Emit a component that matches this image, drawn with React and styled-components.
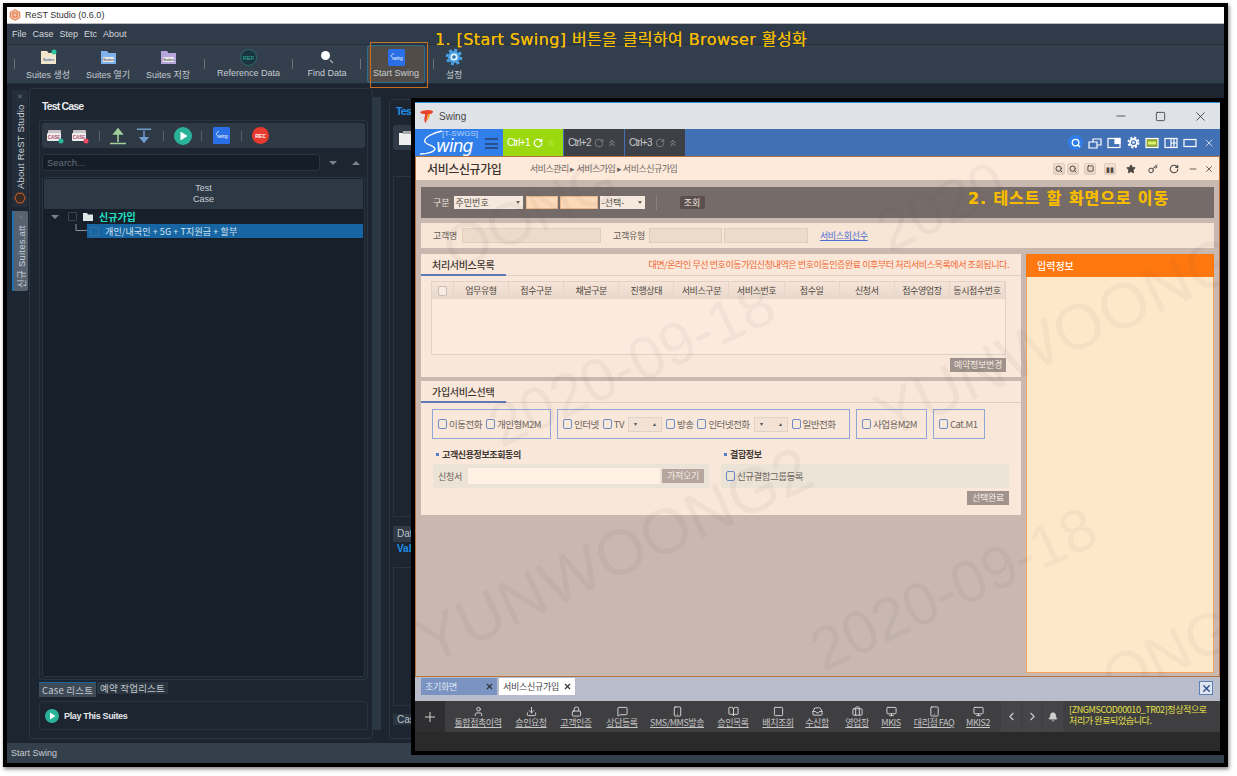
import React from "react";
import styled, { createGlobalStyle } from "styled-components";
import {
  User, Download, Lock, MessageSquare, Smartphone, BookOpen, Square, Inbox, Briefcase,
  Monitor, Tablet, ChevronLeft, ChevronRight, ChevronsUp, Bell, RotateCw, X, Minus, Search, Star, Key, Plus,
} from "lucide-react";

const KR = `"Noto Sans CJK KR", "Liberation Sans", sans-serif`;

const Global = createGlobalStyle`
  html, body { margin: 0; padding: 0; background: #fff; }
  * { box-sizing: border-box; }
  body { font-family: "Liberation Sans", "Noto Sans CJK KR", sans-serif; }
`;

const Page = styled.div`
  width: 1237px;
  height: 776px;
  padding: 3px 9px 9px 3px;
  overflow: hidden;
`;
const Frame = styled.div`
  position: relative;
  width: 1225px;
  height: 764px;
  border: 4px solid #000;
  box-shadow: 1px 2px 4px rgba(0, 0, 0, 0.5);
  display: flex;
  flex-direction: column;
  background: #1c2530;
  overflow: hidden;
`;
const TitleBar = styled.div`
  height: 17px;
  background: #fff;
  display: flex;
  align-items: center;
  gap: 4px;
  padding-left: 2px;
  font-size: 9px;
  color: #333;
  border-bottom: 1px solid #bbb;
`;
const MenuBar = styled.div`
  height: 21px;
  background: #2f3b48;
  display: flex;
  align-items: center;
  gap: 6px;
  padding-left: 5px;
  font-size: 9px;
  color: #d4d8dc;
  border-bottom: 1px solid #25303b;
`;
const ToolBar = styled.div`
  height: 39px;
  background: #333f4c;
  display: flex;
  align-items: stretch;
  padding-left: 7px;
  border-bottom: 1px solid #222c37;
`;
const ToolSep = styled.span`
  width: 1px;
  height: 10px;
  margin: 14px ${(p) => p.$r ?? 6}px 0 ${(p) => p.$l ?? 6}px;
  background: #6a747e;
`;
const ToolItem = styled.div`
  width: ${(p) => p.$w}px;
  display: flex;
  flex-direction: column;
  align-items: center;
  justify-content: flex-start;
  padding-top: 3px;
  gap: 2px;
  font-size: 9px;
  color: #c6ccd2;
  white-space: nowrap;
  border-radius: 3px;
  ${(p) => p.$active && `background: #514c48; border: 1px solid #2c6f92; padding-top: 2px;`}
`;
const ToolGlyph = styled.div`
  width: 18px;
  height: 18px;
  display: flex;
  align-items: center;
  justify-content: center;
`;
const Work = styled.div`
  flex: 1;
  display: flex;
  align-items: stretch;
  padding: 4px 0 4px 5px;
  background: #1c2530;
  min-height: 0;
`;
const Rail = styled.div`
  width: 17px;
  display: flex;
  flex-direction: column;
  gap: 4px;
  padding-top: 2px;
`;
const RailTab = styled.div`
  height: ${(p) => p.$h}px;
  width: 16px;
  background: ${(p) => (p.$on ? "#566270" : "#232e3a")};
  border-right: ${(p) => (p.$on ? "2px solid #1d6fb0" : "0")};
  border-radius: 2px 0 0 2px;
  display: flex;
  align-items: center;
  justify-content: flex-start;
  writing-mode: vertical-rl;
  text-orientation: sideways;
  transform: rotate(180deg);
  gap: 3px;
  padding-top: 3px;
  font-size: 9.5px;
  letter-spacing: 0.2px;
  color: #c8ced4;
  white-space: nowrap;
`;
const RailClose = styled.span`
  margin-top: auto;
  margin-bottom: 4px;
  font-size: 9px;
  color: #6f7a85;
`;
const LeftPanel = styled.div`
  width: 344px;
  border: 1px solid #2a3642;
  border-radius: 4px;
  padding: 11px 4px 8px 9px;
  display: flex;
  flex-direction: column;
`;
const PanelTitle = styled.div`
  height: 20px;
  padding-left: 3px;
  font-size: 10.5px;
  font-weight: 700;
  color: ${(p) => p.$c || "#e8ecef"};
  letter-spacing: -0.85px;
  white-space: nowrap;
  overflow: hidden;
`;
const OuterBox = styled.div`
  flex: 1;
  border: 1px solid #28343f;
  border-radius: 3px;
  padding: 2px;
  display: flex;
  flex-direction: column;
  min-height: 0;
`;
const IconStrip = styled.div`
  height: 25px;
  background: #2f3a46;
  border-radius: 3px;
  display: flex;
  align-items: center;
`;
const StripItem = styled.span`
  flex: none;
  width: ${(p) => p.$w || 25}px;
  display: flex;
  align-items: center;
  justify-content: center;
`;
const StripSep = styled.i`
  flex: none;
  width: 1px;
  height: 10px;
  margin-left: ${(p) => p.$m || 0}px;
  background: #55606b;
`;
const SearchRow = styled.div`
  height: 17px;
  margin-top: 6px;
  display: flex;
  align-items: center;
`;
const SearchBox = styled.div`
  width: 278px;
  height: 17px;
  background: #151d26;
  border: 1px solid #2a3440;
  border-radius: 3px;
  padding-left: 4px;
  font-size: 9.5px;
  line-height: 15px;
  color: #65707b;
`;
const Caret = styled.span`
  width: 0;
  height: 0;
  margin-left: ${(p) => p.$m}px;
  border-left: 4px solid transparent;
  border-right: 4px solid transparent;
  ${(p) => (p.$up ? "border-bottom: 4px solid #7c858e;" : "border-top: 4px solid #7c858e;")}
`;
const TreeBox = styled.div`
  flex: 1;
  margin-top: 6px;
  border: 1px solid #28343f;
  border-radius: 2px;
  padding: 1px;
  background: #17202a;
`;
const TreeHead = styled.div`
  height: 30px;
  background: #2c3844;
  text-align: center;
  font-size: 9px;
  line-height: 11px;
  padding-top: 4px;
  color: #c8ced4;
`;
const TreeRow = styled.div`
  height: ${(p) => p.$h || 15}px;
  display: flex;
  align-items: center;
  font-family: ${KR};
  white-space: nowrap;
`;
const TreeSel = styled.div`
  flex: 1;
  height: 100%;
  display: flex;
  align-items: center;
  background: #1766a3;
`;
const TreeCaret = styled.span`
  width: 0;
  height: 0;
  margin: 0 9px 0 7px;
  border-left: 4px solid transparent;
  border-right: 4px solid transparent;
  border-top: 4px solid #78818a;
`;
const TreeCheck = styled.span`
  width: 9px;
  height: 9px;
  border: 1px solid ${(p) => p.$c || "#3a444f"};
  border-radius: 1px;
  margin: ${(p) => p.$mg || "0 5px 0 0"};
`;
const TreeName = styled.span`
  font-size: ${(p) => p.$s || 9}px;
  font-weight: ${(p) => p.$w || 400};
  color: ${(p) => p.$c};
  letter-spacing: ${(p) => p.$ls || 0}px;
`;
const Elbow = styled.span`
  flex: none;
  width: 43px;
  height: 100%;
  display: flex;
  justify-content: flex-end;
`;
const SubTabs = styled.div`
  height: 16px;
  margin-top: 2px;
  display: flex;
  gap: 1px;
  font-family: ${KR};
  font-size: 9.5px;
  letter-spacing: 0.2px;
  color: #c2c8ce;
`;
const SubTab = styled.div`
  padding: 0 3px;
  display: flex;
  align-items: center;
  background: ${(p) => (p.$on ? "#3e4a56" : "#2a3540")};
  height: ${(p) => (p.$on ? 15 : 12)}px;
  border-top: ${(p) => (p.$on ? "1px solid #1766a3" : "0")};
`;
const PlayBox = styled.div`
  height: 29px;
  margin-top: 3px;
  border: 1px solid #28343f;
  border-radius: 4px;
  display: flex;
  align-items: center;
  gap: 5px;
  padding-left: 5px;
  font-size: 9px;
  font-weight: 700;
  letter-spacing: -0.35px;
  color: #e4e8eb;
`;
const Splitter = styled.div`
  width: 8px;
  margin: 9px 8px 9px 0;
  background: #2b3743;
`;
const RightPanel = styled.div`
  flex: 1;
  border: 1px solid #2a3642;
  border-radius: 4px 0 0 4px;
  margin-top: 11px;
  padding: 5px 0 0 3px;
  display: flex;
  flex-direction: column;
`;
const StepStrip = styled.div`
  flex: none;
  height: 25px;
  background: #2f3a46;
  border-radius: 3px 0 0 3px;
  display: flex;
  align-items: center;
  padding-left: 6px;
`;
const DarkBox = styled.div`
  flex: ${(p) => (p.$h ? "none" : 1)};
  height: ${(p) => p.$h || "auto"};
  border: 1px solid #28343f;
  border-right: 0;
  margin-top: ${(p) => p.$m || 6}px;
`;
const RightTab = styled.div`
  flex: none;
  height: ${(p) => p.$h || 15}px;
  background: ${(p) => p.$bg || "transparent"};
  color: ${(p) => p.$c || "#bcc3ca"};
  font-size: 10px;
  font-weight: ${(p) => p.$b || 400};
  padding-left: 4px;
  line-height: ${(p) => p.$h || 15}px;
  margin-top: ${(p) => p.$m || 0}px;
  margin-bottom: ${(p) => p.$mb || 0}px;
  white-space: nowrap;
  overflow: hidden;
`;
const StatusBar = styled.div`
  height: 20px;
  background: #333f4b;
  padding-left: 4px;
  font-size: 9px;
  line-height: 20px;
  color: #c8ced4;
`;

const Callout = styled.div`
  position: absolute;
  left: 363px;
  top: 35px;
  width: 58px;
  height: 46px;
  border: 1px solid #c76f22;
  pointer-events: none;
`;
const Note = styled.div`
  position: absolute;
  left: ${(p) => p.$x}px;
  top: ${(p) => p.$y}px;
  font-family: "DejaVu Sans", ${KR};
  font-size: 16px;
  line-height: 18px;
  letter-spacing: ${(p) => p.$ls || 0.4}px;
  font-weight: ${(p) => p.$b || 400};
  color: #f7bb00;
  text-shadow: 0 0 0.6px #f7bb00;
  white-space: nowrap;
  z-index: 5;
`;

/* Swing window, it floats over the studio */
const Win = styled.div`
  position: absolute;
  left: 404px;
  top: 91px;
  width: 813px;
  height: 657px;
  border: 4px solid #000;
  display: flex;
  flex-direction: column;
  overflow: hidden;
  background: #2a2a2a;
  z-index: 2;
`;
const WinTitle = styled.div`
  height: 27px;
  background: #dfe3e8;
  border-top: 1px solid #2b8fd9;
  display: flex;
  align-items: center;
  padding-left: 4px;
  font-size: 10px;
  color: #444;
  gap: 5px;
`;
const WinBtns = styled.div`
  margin-left: auto;
  display: flex;
  align-items: center;
  gap: 27px;
  padding-right: 12px;
  color: #222;
`;
const BlueBar = styled.div`
  height: 27px;
  background: #4270b5;
  display: flex;
  align-items: stretch;
`;
const Logo = styled.div`
  position: relative;
  width: 88px;
  background: #2f7eea;
  color: #fff;
`;
const LogoTag = styled.span`
  position: absolute;
  left: 27px;
  top: 0;
  font-size: 8px;
  line-height: 9px;
  color: #b9d5ff;
  white-space: nowrap;
`;
const LogoWord = styled.span`
  position: absolute;
  left: 21px;
  top: 9px;
  font-size: 17px;
  line-height: 16px;
  font-style: italic;
  font-family: "DejaVu Sans", sans-serif;
  letter-spacing: -1px;
`;
const Burger = styled.span`
  position: absolute;
  left: 70px;
  top: 9px;
  width: 13px;
  height: 11px;
  border-top: 2px solid #2b4f8a;
  border-bottom: 2px solid #2b4f8a;
  &::after {
    content: "";
    display: block;
    height: 2px;
    margin-top: 2.5px;
    background: #2b4f8a;
  }
`;
const CtrlTab = styled.div`
  width: 60px;
  margin-right: 1px;
  background: ${(p) => (p.$on ? "#9bd80e" : "#3d4046")};
  color: ${(p) => (p.$on ? "#fff" : "#c8cacc")};
  display: flex;
  align-items: center;
  gap: 3px;
  padding-left: 4px;
  font-size: 10px;
  letter-spacing: -0.7px;
  white-space: nowrap;
  svg { flex: none; }
`;
const BlueTools = styled.div`
  margin-left: auto;
  display: flex;
  align-items: center;
  gap: 5px;
  padding-right: 4px;
  color: #fff;
`;
const BlueTool = styled.span`
  width: 14px;
  height: 14px;
  display: flex;
  align-items: center;
  justify-content: center;
  ${(p) => p.$round && `background: #2f7eea; border-radius: 50%; width: 15px; height: 15px;`}
`;
const Content = styled.div`
  position: relative;
  height: 521px;
  flex: none;
  border: 1px solid #b5743f;
  background: #c8b8af;
  display: flex;
  flex-direction: column;
  font-family: ${KR};
  overflow: hidden;
`;
const PageHead = styled.div`
  height: 24px;
  flex: none;
  background: #fdeadb;
  display: flex;
  align-items: center;
  padding-left: 11px;
  border-bottom: 1px solid #c8b8af;
`;
const PageName = styled.div`
  width: 103px;
  font-size: 12px;
  font-weight: 500;
  color: #3a332e;
  letter-spacing: -0.4px;
`;
const Crumbs = styled.div`
  font-size: 9px;
  color: #6e6560;
  letter-spacing: -0.5px;
`;
const HeadTools = styled.div`
  margin-left: auto;
  display: flex;
  align-items: center;
  color: #4b4642;
  padding-right: 3px;
`;
const HeadTool = styled.span`
  width: ${(p) => p.$w || 15}px;
  height: 12px;
  display: flex;
  align-items: center;
  justify-content: center;
  font-size: 7px;
  ${(p) => p.$box && `
    background: linear-gradient(#f5e0d0, #e5d2c3);
    border: 1px solid #e0cdbd;
    border-radius: 2px;
    width: 12px;
    margin: 0 ${p.$box}px;
  `}
`;
const SearchBand = styled.div`
  flex: none;
  height: 31px;
  margin: 6px 5px 0;
  background: #756b69;
  display: flex;
  align-items: center;
  padding-left: 12px;
  font-size: 9px;
  color: #efe6de;
`;
const Drop = styled.div`
  width: ${(p) => p.$w}px;
  height: 13px;
  margin-left: ${(p) => p.$m || 0}px;
  background: #f5e8dd;
  color: #524a45;
  font-size: 9px;
  line-height: 13px;
  padding-left: 2px;
  position: relative;
  &::after {
    content: "";
    position: absolute;
    right: 3px;
    top: 5px;
    border-left: 2.5px solid transparent;
    border-right: 2.5px solid transparent;
    border-top: 3px solid #665;
  }
`;
const Peach = styled.div`
  width: ${(p) => p.$w}px;
  height: 13px;
  margin-left: ${(p) => p.$m || 0}px;
  background: #fcd9b8;
  border: 1px solid #e9b98b;
`;
const BandSep = styled.span`
  width: 1px;
  height: 14px;
  margin-left: 11px;
  background: #8a807d;
`;
const QueryBtn = styled.div`
  width: 25px;
  height: 13px;
  margin-left: 23px;
  background: #5c504e;
  border-radius: 2px;
  text-align: center;
  font-size: 9px;
  line-height: 13px;
  color: #eee4dc;
`;
const CustBand = styled.div`
  flex: none;
  height: 25px;
  margin: 5px 5px 0;
  background: #f7e5d6;
  display: flex;
  align-items: center;
  padding-left: 12px;
  font-size: 9px;
  color: #5f5853;
  letter-spacing: -0.3px;
`;
const FieldGrey = styled.div`
  width: ${(p) => p.$w}px;
  height: 15px;
  margin-left: ${(p) => p.$m || 0}px;
  background: #ecdacb;
  border: 1px solid #dfcdbe;
`;
const CustLabel = styled.span`
  margin-left: ${(p) => p.$m || 0}px;
`;
const Link = styled.span`
  margin-left: 12px;
  color: #4a6fd0;
  text-decoration: underline;
`;
const Columns = styled.div`
  flex: 1;
  display: flex;
  gap: 5px;
  margin: 6px 5px 3px;
  min-height: 0;
`;
const LeftCol = styled.div`
  width: 600px;
  display: flex;
  flex-direction: column;
  gap: 4px;
`;
const Card = styled.div`
  height: ${(p) => p.$h}px;
  background: #f9e7d9;
`;
const CardHead = styled.div`
  height: 22px;
  display: flex;
  align-items: center;
  justify-content: space-between;
  padding-right: 12px;
  border-bottom: 1px solid #ddd0c6;
`;
const CardTitle = styled.div`
  width: 85px;
  height: 22px;
  padding-left: 11px;
  font-size: 10px;
  line-height: 21px;
  font-weight: 500;
  color: #3c3632;
  letter-spacing: -0.3px;
  border-bottom: 2px solid #5d79b8;
`;
const Warn = styled.div`
  font-size: 9px;
  color: #f26a35;
  letter-spacing: -0.42px;
  white-space: nowrap;
`;
const Grid = styled.div`
  margin: 5px 0 0 10px;
  width: 575px;
  height: 74px;
  border: 1px solid #e0d2c7;
  background: #fbebdf;
`;
const GridHead = styled.div`
  height: 17px;
  display: flex;
  background: linear-gradient(#f5e4d7, #e8d8cb);
`;
const GridCheckCell = styled.div`
  width: 22px;
  display: flex;
  align-items: center;
  justify-content: center;
  border-right: 1px solid #e6d6c9;
`;
const GridCell = styled.div`
  width: 55.3px;
  text-align: center;
  font-size: 9px;
  line-height: 17px;
  color: #4e4741;
  letter-spacing: -0.4px;
  white-space: nowrap;
  border-right: 1px solid #e6d6c9;
`;
const GreyBtn = styled.div`
  flex: none;
  width: ${(p) => p.$w}px;
  height: 14px;
  background: ${(p) => p.$bg || "#a0938d"};
  color: #f6ece4;
  font-size: 9px;
  line-height: 14px;
  text-align: center;
  letter-spacing: -0.3px;
  margin-left: ${(p) => p.$m || 0}px;
`;
const BtnRow = styled.div`
  display: flex;
  justify-content: flex-end;
  margin: 3px ${(p) => p.$r}px 0 0;
`;
const Groups = styled.div`
  display: flex;
  margin: 6px 0 0 11px;
  height: 30px;
`;
const Group = styled.div`
  width: ${(p) => p.$w}px;
  margin-right: ${(p) => p.$g || 6}px;
  border: 1px solid #8ea6d8;
  display: flex;
  align-items: center;
  padding-left: 5px;
  gap: ${(p) => p.$gap || 4}px;
`;
const Check = styled.span`
  flex: none;
  width: 9px;
  height: 10px;
  background: ${(p) => p.$bg || "transparent"};
  border: 1px solid ${(p) => p.$c || "#6a8ac8"};
  border-radius: 2px;
`;
const Opt = styled.label`
  display: flex;
  align-items: center;
  gap: 2px;
  font-size: 9.5px;
  color: #6c6560;
  letter-spacing: -0.5px;
  white-space: nowrap;
`;
const Spin = styled.span`
  width: 34px;
  height: 15px;
  background: #f3e3d6;
  border: 1px solid #e2d3c6;
  display: flex;
  align-items: center;
  justify-content: space-between;
  padding: 0 5px;
  font-size: 6px;
  line-height: 1;
  color: #555;
`;
const TwoCols = styled.div`
  display: flex;
  margin: 9px 0 0 12px;
  gap: 12px;
`;
const SideBlock = styled.div`
  width: ${(p) => p.$w}px;
`;
const SubTitle = styled.div`
  height: 16px;
  padding-left: 3px;
  display: flex;
  align-items: flex-start;
  font-size: 9px;
  font-weight: 700;
  color: #3f3934;
  letter-spacing: -0.4px;
  &::before {
    content: "";
    width: 3px;
    height: 3px;
    margin: 5px 3px 0 0;
    background: #5d79d0;
  }
`;
const Shade = styled.div`
  height: 24px;
  background: #ebe3d6;
  display: flex;
  align-items: center;
  padding-left: 5px;
  font-size: 9px;
  color: #6a635e;
  letter-spacing: -0.3px;
  white-space: nowrap;
`;
const WhiteInput = styled.div`
  flex: none;
  width: 192px;
  height: 16px;
  margin-left: 6px;
  background: #fff0e4;
`;
const InfoCol = styled.div`
  width: 188px;
  background: #fde9c9;
  border: 1px solid #f2a45c;
  border-top: 0;
  display: flex;
  flex-direction: column;
`;
const InfoHead = styled.div`
  height: 23px;
  background: #ff780f;
  margin: 0 -1px;
  padding-left: 11px;
  font-size: 10px;
  font-weight: 500;
  line-height: 23px;
  color: #fff;
`;
const Mark = styled.div`
  position: absolute;
  left: ${(p) => p.$x}px;
  top: ${(p) => p.$y}px;
  transform: translate(-50%, -50%) rotate(-25deg);
  font-family: "Liberation Sans", sans-serif;
  font-size: ${(p) => p.$s || 62}px;
  line-height: 1;
  color: rgba(95, 75, 65, 0.055);
  white-space: nowrap;
  pointer-events: none;
  z-index: 3;
`;
const TabStrip = styled.div`
  height: 24px;
  flex: none;
  background: #b8bccb;
  display: flex;
  align-items: flex-start;
  padding: 1px 7px 0 6px;
  gap: 2px;
  font-family: ${KR};
  font-size: 9px;
  letter-spacing: -0.3px;
`;
const OpenTab = styled.div`
  width: 76px;
  height: 17px;
  background: ${(p) => (p.$on ? "#fff" : "#7b93c0")};
  color: ${(p) => (p.$on ? "#444" : "#dfe6f3")};
  display: flex;
  align-items: center;
  justify-content: space-between;
  padding: 0 3px 0 4px;
`;
const CloseAll = styled.div`
  margin: 3px 0 0 auto;
  width: 14px;
  height: 14px;
  border: 1px solid #5c7fb5;
  background: #dfe5ef;
  color: #2b4f8a;
  display: flex;
  align-items: center;
  justify-content: center;
`;
const Dock = styled.div`
  height: 31px;
  flex: none;
  background: #3f3f42;
  display: flex;
  align-items: stretch;
  font-family: ${KR};
`;
const DockPlus = styled.div`
  width: 30px;
  background: #2f2f32;
  color: #ddd;
  display: flex;
  align-items: center;
  justify-content: center;
`;
const DockItem = styled.div`
  width: ${(p) => p.$w}px;
  display: flex;
  flex-direction: column;
  align-items: center;
  padding-top: 5px;
  font-size: 9px;
  line-height: 12px;
  letter-spacing: -0.45px;
  color: #c4c4c4;
  white-space: nowrap;
  svg { color: #dcdcdc; }
  span { text-decoration: underline; }
`;
const DockNav = styled.div`
  width: 20px;
  margin-left: ${(p) => p.$m || 1}px;
  background: #454548;
  color: #cfcfcf;
  display: flex;
  align-items: center;
  justify-content: center;
`;
const DockMsg = styled.div`
  width: 146px;
  margin-left: 6px;
  padding-top: 3px;
  font-size: 9px;
  line-height: 11px;
  letter-spacing: -0.4px;
  word-break: break-all;
  color: #e6e04a;
`;
const DockFoot = styled.div`
  flex: 1;
  background: #2a2a2a;
`;

const SuiteIcon = ({ c, badge }) => (
  <svg width="17" height="16" viewBox="0 0 17 16">
    <path d="M1 2h6l1.5 2H16v11H1z" fill={c} />
    <rect x="3" y="8" width="11" height="5" fill="#e8e8e8" />
    <text x="8.5" y="12" fontSize="4" textAnchor="middle" fill="#333" fontFamily="Liberation Sans">Suites</text>
    {badge && <circle cx="14" cy="3" r="2.5" fill="#29c7a0" />}
  </svg>
);
const CaseIcon = ({ c }) => (
  <svg width="18" height="16" viewBox="0 0 18 16">
    <rect x="2" y="2" width="13" height="4" fill="#c9c3c8" rx="1" />
    <rect x="1" y="5" width="14" height="8" fill="#eee" rx="1" />
    <text x="8" y="11" fontSize="4.5" fontWeight="700" textAnchor="middle" fill="#b04a6a" fontFamily="Liberation Sans">CASE</text>
    <circle cx="15" cy="13" r="2.5" fill={c} />
  </svg>
);
const SwingChip = ({ s = 17 }) => (
  <svg width={s} height={s} viewBox="0 0 17 17">
    <rect width="17" height="17" rx="1.5" fill="#2a6fe6" />
    <path d="M6 4.5C3.5 5.5 2.5 7 4 8c1 .7 1.5 1.3.5 2.5" stroke="#fff" fill="none" strokeWidth=".8" />
    <text x="5.5" y="10.5" fontSize="4.5" fontStyle="italic" fill="#fff" fontFamily="Liberation Sans">wing</text>
  </svg>
);
const PlayIcon = ({ s = 18 }) => (
  <svg width={s} height={s} viewBox="0 0 18 18">
    <circle cx="9" cy="9" r="9" fill="#2bb39a" />
    <path d="M6.5 4.5v9l7-4.5z" fill="#fff" />
  </svg>
);
const ArrowIcon = ({ down }) => (
  <svg width="18" height="18" viewBox="0 0 18 18">
    {down ? (
      <path d="M1 1.5h16M9 3v12M5 11l4 5 4-5z" stroke="#6f9fd0" strokeWidth="1.6" fill="#6f9fd0" />
    ) : (
      <path d="M1 16.5h16M9 15V4M5 7l4-5 4 5z" stroke="#9fd09a" strokeWidth="1.6" fill="#9fd09a" />
    )}
  </svg>
);
const GearIcon = ({ s = 18, body = "#4aa3e8", hole = "#dff1fb", mid = "#2a6fb0" }) => (
  <svg width={s} height={s} viewBox="0 0 18 18">
    <circle cx="9" cy="9" r="6" fill={body} />
    <circle cx="9" cy="9" r="7" fill="none" stroke={body} strokeWidth="2.6" strokeDasharray="3 2.5" />
    <circle cx="9" cy="9" r="3.6" fill={hole} />
    <circle cx="9" cy="9" r="1.8" fill={mid} />
  </svg>
);
const SwingLogoS = () => (
  <svg width="30" height="27" viewBox="0 0 30 27" style={{ position: "absolute", left: 3, top: 0 }}>
    <path d="M24 2C14 4 5 9 7 13c2 3.500 9 3 10 7-1 3-8 5-15 5" stroke="#fff" strokeWidth="1.4" fill="none" />
  </svg>
);
const TLogo = () => (
  <svg width="15" height="15" viewBox="0 0 15 15">
    <path d="M1 3c3-2 9-3 13-1 0 2-1 3-3 3l-2 0-2 9C4 12 6 8 6 5 4 5 2 5 1 3z" fill="#e8442e" />
    <path d="M9 5l2 0c-.5 3-2 6-3 7z" fill="#f59c1a" />
  </svg>
);
const WinIcon = ({ kind }) => (
  <svg width="14" height="12" viewBox="0 0 14 12" fill="none" stroke="#fff" strokeWidth="1.2">
    {kind === "restore" && <path d="M1 5h8v6H1zM5 5V2h8v6H9" />}
    {kind === "side" && <><rect x="1" y="1.500" width="12" height="9" /><rect x="8" y="1.500" width="5" height="5" fill="#fff" /></>}
    {kind === "lime" && <><rect x="1" y="1.500" width="12" height="9" fill="#8fa83a" /><rect x="3" y="4.500" width="8" height="3" fill="#e3ef6a" stroke="none" /></>}
    {kind === "grid" && <><rect x="1" y="1.500" width="12" height="9" /><path d="M7 1.500v9M10 1.500v9M7 6h6" /></>}
    {kind === "wide" && <rect x="1" y="2.500" width="12" height="7" />}
  </svg>
);

const studioTools = [
  { w: 60, label: "Suites 생성", icon: <SuiteIcon c="#f2e6c8" badge /> },
  { w: 60, label: "Suites 열기", icon: <SuiteIcon c="#7fb2ea" /> },
  { w: 60, label: "Suites 저장", icon: <SuiteIcon c="#b7a6dc" /> },
];
const gridHeads = ["업무유형", "접수구분", "채널구분", "진행상태", "서비스구분", "서비스번호", "접수일", "신청서", "접수영업장", "동시접수번호"];
const dockItems = [
  { w: 66, t: "통합접촉이력", I: User },
  { w: 40, t: "승인요청", I: Download },
  { w: 50, t: "고객인증", I: Lock },
  { w: 42, t: "상담등록", I: MessageSquare },
  { w: 68, t: "SMS/MMS발송", I: Smartphone },
  { w: 44, t: "승인목록", I: BookOpen },
  { w: 46, t: "배치조회", I: Square },
  { w: 32, t: "수신함", I: Inbox },
  { w: 48, t: "영업장", I: Briefcase },
  { w: 20, t: "MKIS", I: Monitor },
  { w: 66, t: "대리점 FAQ", I: Tablet },
  { w: 22, t: "MKIS2", I: Monitor },
];
const marks = [
  { t: "2020-09-18", x: 216, y: 208, s: 60 },
  { t: "YUNWOONG2", x: 198, y: 398, s: 64 },
  { t: "2020-09-18", x: 538, y: 432, s: 60 },
  { t: "YUNWOONG", x: 640, y: 180, s: 64 },
  { t: "2020", x: 525, y: 50, s: 60 },
  { t: "OONG", x: 114, y: 58, s: 60 },
  { t: "ONG", x: 752, y: 497, s: 60 },
];

export default function App() {
  return (
    <Page>
      <Global />
      <Frame>
        <TitleBar>
          <svg width="12" height="12" viewBox="0 0 12 12">
            <path d="M6 .7 10.8 3.400v5.200L6 11.300 1.200 8.600V3.400z" fill="#f3c6ae" stroke="#e4703a" />
            <rect x="4" y="4" width="4" height="4" fill="none" stroke="#e4703a" />
          </svg>
          ReST Studio (0.6.0)
        </TitleBar>
        <MenuBar>
          <span>File</span><span>Case</span><span>Step</span><span>Etc</span><span>About</span>
        </MenuBar>
        <ToolBar>
          <ToolSep $l={0} $r={3} />
          {studioTools.map((t) => (
            <ToolItem key={t.label} $w={t.w}>
              <ToolGlyph>{t.icon}</ToolGlyph>
              {t.label}
            </ToolItem>
          ))}
          <ToolSep />
          <ToolItem $w={75}>
            <ToolGlyph>
              <svg width="17" height="17" viewBox="0 0 17 17">
                <circle cx="8.500" cy="8.500" r="8" fill="#1c3440" stroke="#2a6f6a" />
                <text x="8.500" y="11" fontSize="6" textAnchor="middle" fill="#2bb39a" fontFamily="Liberation Sans">REF</text>
              </svg>
            </ToolGlyph>
            Reference Data
          </ToolItem>
          <ToolSep />
          <ToolItem $w={56}>
            <ToolGlyph>
              <svg width="16" height="16" viewBox="0 0 16 16">
                <circle cx="6.500" cy="6.500" r="4.500" fill="#fff" />
                <path d="M11 11l3 3" stroke="#aab" strokeWidth="1.200" />
              </svg>
            </ToolGlyph>
            Find Data
          </ToolItem>
          <ToolSep $l={5} $r={6} />
          <ToolItem $w={58} $active>
            <ToolGlyph><SwingChip /></ToolGlyph>
            Start Swing
          </ToolItem>
          <ToolSep $l={8} $r={3} />
          <ToolItem $w={34}>
            <ToolGlyph><GearIcon /></ToolGlyph>
            <span style={{ fontFamily: KR }}>설정</span>
          </ToolItem>
        </ToolBar>
        <Work>
          <Rail>
            <RailTab $h={117}>
              <svg width="12" height="12" viewBox="0 0 12 12" style={{ transform: "rotate(90deg)" }}>
                <path d="M6 .7 10.800 3.400v5.200L6 11.300 1.200 8.600V3.400z" fill="#3a2a22" stroke="#d9602c" />
              </svg>
              About ReST Studio
              <RailClose>×</RailClose>
            </RailTab>
            <RailTab $h={80} $on>
              <span style={{ fontFamily: KR }}>신규</span> Suites.att
              <RailClose>×</RailClose>
            </RailTab>
          </Rail>
          <LeftPanel>
            <PanelTitle>Test Case</PanelTitle>
            <OuterBox>
              <IconStrip>
                <StripItem><CaseIcon c="#2bb39a" /></StripItem>
                <StripItem><CaseIcon c="#e84a5f" /></StripItem>
                <StripSep $m={7} />
                <StripItem $w={36}><ArrowIcon /></StripItem>
                <StripItem $w={16}><ArrowIcon down /></StripItem>
                <StripSep $m={11} />
                <StripItem $w={37}><PlayIcon /></StripItem>
                <StripSep />
                <StripItem $w={39}><SwingChip /></StripItem>
                <StripSep />
                <StripItem $w={37}>
                  <svg width="17" height="17" viewBox="0 0 17 17">
                    <circle cx="8.500" cy="8.500" r="8.500" fill="#e8392e" />
                    <text x="8.500" y="10.500" fontSize="5" fontWeight="700" textAnchor="middle" fill="#fff" fontFamily="Liberation Sans">REC</text>
                  </svg>
                </StripItem>
              </IconStrip>
              <SearchRow>
                <SearchBox>Search...</SearchBox>
                <Caret $m={9} />
                <Caret $m={15} $up />
              </SearchRow>
              <TreeBox>
                <TreeHead>Test<br />Case</TreeHead>
                <TreeRow>
                  <TreeCaret />
                  <TreeCheck $mg="0 6px 0 0" />
                  <svg width="10" height="9" viewBox="0 0 10 9" style={{ marginRight: 6 }}>
                    <path d="M0 1h4l1 1.500h5V9H0z" fill="#dfe6e6" />
                  </svg>
                  <TreeName $s={10} $w={700} $c="#1fe0c4">신규가입</TreeName>
                </TreeRow>
                <TreeRow $h={14}>
                  <Elbow>
                    <svg width="12" height="14" viewBox="0 0 12 14">
                      <path d="M1 0v6.500h11" stroke="#8a939c" fill="none" />
                    </svg>
                  </Elbow>
                  <TreeSel>
                    <TreeCheck $c="#3a6f9a" $mg="0 6px 0 3px" />
                    <TreeName $c="#d8e4ee" $ls={0.1}>개인/내국인 + 5G + T지원금 + 할부</TreeName>
                  </TreeSel>
                </TreeRow>
              </TreeBox>
            </OuterBox>
            <SubTabs>
              <SubTab $on>Case 리스트</SubTab>
              <SubTab>예약 작업리스트</SubTab>
            </SubTabs>
            <PlayBox><PlayIcon s={14} />Play This Suites</PlayBox>
          </LeftPanel>
          <Splitter />
          <RightPanel>
            <PanelTitle $c="#1f8fe8">Test Step</PanelTitle>
            <StepStrip>
              <svg width="16" height="14" viewBox="0 0 16 14">
                <rect y="2" width="16" height="12" fill="#eee" />
                <rect x="4" width="8" height="3" fill="#aaa" />
              </svg>
            </StepStrip>
            <DarkBox $m={26} />
            <RightTab $bg="#2f3a46" $m={9} $h={16}>Data</RightTab>
            <RightTab $c="#1f8fe8" $b={700} $h={14}>Value</RightTab>
            <DarkBox $h="139px" $m={11} />
            <RightTab $bg="#2a3540" $m={8} $h={11} $mb={13}>Case</RightTab>
          </RightPanel>
        </Work>
        <StatusBar>Start Swing</StatusBar>

        <Callout />
        <Note $x={428} $y={24}>1. [Start Swing] 버튼을 클릭하여 Browser 활성화</Note>

        <Win>
          <WinTitle>
            <TLogo />
            Swing
            <WinBtns>
              <Minus size={14} strokeWidth={1.2} />
              <Square size={11} strokeWidth={1.6} />
              <X size={15} strokeWidth={1.2} />
            </WinBtns>
          </WinTitle>
          <BlueBar>
            <Logo>
              <SwingLogoS />
              <LogoTag>[T-SWGS]</LogoTag>
              <LogoWord>wing</LogoWord>
              <Burger />
            </Logo>
            <CtrlTab $on>Ctrl+1 <RotateCw size={10} strokeWidth={3} /> <ChevronsUp size={10} color="#c6ea6a" /></CtrlTab>
            <CtrlTab>Ctrl+2 <RotateCw size={10} color="#888" /> <ChevronsUp size={10} color="#aaa" /></CtrlTab>
            <CtrlTab>Ctrl+3 <RotateCw size={10} color="#888" /> <ChevronsUp size={10} color="#aaa" /></CtrlTab>
            <BlueTools>
              <BlueTool $round><Search size={10} strokeWidth={3} /></BlueTool>
              <BlueTool><WinIcon kind="restore" /></BlueTool>
              <BlueTool><WinIcon kind="side" /></BlueTool>
              <BlueTool><GearIcon s={13} body="#fff" hole="#4270b5" mid="#fff" /></BlueTool>
              <BlueTool><WinIcon kind="lime" /></BlueTool>
              <BlueTool><WinIcon kind="grid" /></BlueTool>
              <BlueTool><WinIcon kind="wide" /></BlueTool>
              <BlueTool><X size={12} color="#c9d6ea" /></BlueTool>
            </BlueTools>
          </BlueBar>
          <Content>
            <PageHead>
              <PageName>서비스신규가입</PageName>
              <Crumbs>서비스관리 ▸ 서비스가입 ▸ 서비스신규가입</Crumbs>
              <HeadTools>
                <HeadTool $box={1}><Search size={8} strokeWidth={3} /></HeadTool>
                <HeadTool $box={1}><Search size={8} strokeWidth={3} /></HeadTool>
                <HeadTool $box={4}><Square size={7} strokeWidth={3} /></HeadTool>
                <HeadTool $box={4}>▮▮</HeadTool>
                <HeadTool $w={22}><Star size={10} fill="#4b4642" /></HeadTool>
                <HeadTool $w={21}><Key size={10} strokeWidth={2.4} /></HeadTool>
                <HeadTool $w={21}><RotateCw size={10} strokeWidth={2.6} /></HeadTool>
                <HeadTool $w={17}><Minus size={10} /></HeadTool>
                <HeadTool $w={15}><X size={10} /></HeadTool>
              </HeadTools>
            </PageHead>
            <SearchBand>
              구분
              <Drop $w={69} $m={4}>주민번호</Drop>
              <Peach $w={32} $m={3} />
              <Peach $w={38} $m={2} />
              <Drop $w={45} $m={2}>-선택-</Drop>
              <BandSep />
              <QueryBtn>조회</QueryBtn>
              <Note as="span" $x={552} $y={33} $ls={0.9} $b={700}>2. 테스트 할 화면으로 이동</Note>
            </SearchBand>
            <CustBand>
              고객명
              <FieldGrey $w={139} $m={5} />
              <CustLabel $m={12}>고객유형</CustLabel>
              <FieldGrey $w={73} $m={4} />
              <FieldGrey $w={84} $m={2} />
              <Link>서비스회선수</Link>
            </CustBand>
            <Columns>
              <LeftCol>
                <Card $h={123}>
                  <CardHead>
                    <CardTitle>처리서비스목록</CardTitle>
                    <Warn>대면/온라인 무선 번호이동가입신청내역은 번호이동인증완료 이후부터 처리서비스목록에서 조회됩니다.</Warn>
                  </CardHead>
                  <Grid>
                    <GridHead>
                      <GridCheckCell><Check $c="#cbbcb0" $bg="#f7ece3" /></GridCheckCell>
                      {gridHeads.map((h) => <GridCell key={h}>{h}</GridCell>)}
                    </GridHead>
                  </Grid>
                  <BtnRow $r={15}><GreyBtn $w={56}>예약정보변경</GreyBtn></BtnRow>
                </Card>
                <Card $h={134}>
                  <CardHead>
                    <CardTitle>가입서비스선택</CardTitle>
                  </CardHead>
                  <Groups>
                    <Group $w={119}>
                      <Opt><Check />이동전화</Opt>
                      <Opt><Check />개인형M2M</Opt>
                    </Group>
                    <Group $w={293}>
                      <Opt><Check />인터넷</Opt>
                      <Opt><Check />TV</Opt>
                      <Spin>▾<span>▴</span></Spin>
                      <Opt><Check />방송</Opt>
                      <Opt><Check />인터넷전화</Opt>
                      <Spin>▾<span>▴</span></Spin>
                      <Opt><Check />일반전화</Opt>
                    </Group>
                    <Group $w={71}><Opt><Check />사업용M2M</Opt></Group>
                    <Group $w={52}><Opt><Check />Cat.M1</Opt></Group>
                  </Groups>
                  <TwoCols>
                    <SideBlock $w={276}>
                      <SubTitle>고객신용정보조회동의</SubTitle>
                      <Shade>
                        신청서
                        <WhiteInput />
                        <GreyBtn $w={42} $bg="#b5a79f" $m={2}>가져오기</GreyBtn>
                      </Shade>
                    </SideBlock>
                    <SideBlock $w={288}>
                      <SubTitle>결합정보</SubTitle>
                      <Shade><Opt><Check />신규결합그룹등록</Opt></Shade>
                    </SideBlock>
                  </TwoCols>
                  <BtnRow $r={12}><GreyBtn $w={42}>선택완료</GreyBtn></BtnRow>
                </Card>
              </LeftCol>
              <InfoCol><InfoHead>입력정보</InfoHead></InfoCol>
            </Columns>
            {marks.map((m) => <Mark key={m.t + m.x} $x={m.x} $y={m.y} $s={m.s}>{m.t}</Mark>)}
          </Content>
          <TabStrip>
            <OpenTab>초기화면<X size={9} strokeWidth={3} color="#333" /></OpenTab>
            <OpenTab $on>서비스신규가입<X size={9} strokeWidth={3} color="#333" /></OpenTab>
            <CloseAll><X size={11} strokeWidth={3} /></CloseAll>
          </TabStrip>
          <Dock>
            <DockPlus><Plus size={16} strokeWidth={1.4} /></DockPlus>
            {dockItems.map((d) => (
              <DockItem key={d.t} $w={d.w}>
                <d.I size={11} strokeWidth={2} />
                <span>{d.t}</span>
              </DockItem>
            ))}
            <DockNav $m={12}><ChevronLeft size={13} /></DockNav>
            <DockNav><ChevronRight size={13} /></DockNav>
            <DockNav><Bell size={10} fill="#cfcfcf" /></DockNav>
            <DockMsg>[ZNGMSCOD00010_TR02]정상적으로 처리가 완료되었습니다.</DockMsg>
          </Dock>
          <DockFoot />
        </Win>
      </Frame>
    </Page>
  );
}
